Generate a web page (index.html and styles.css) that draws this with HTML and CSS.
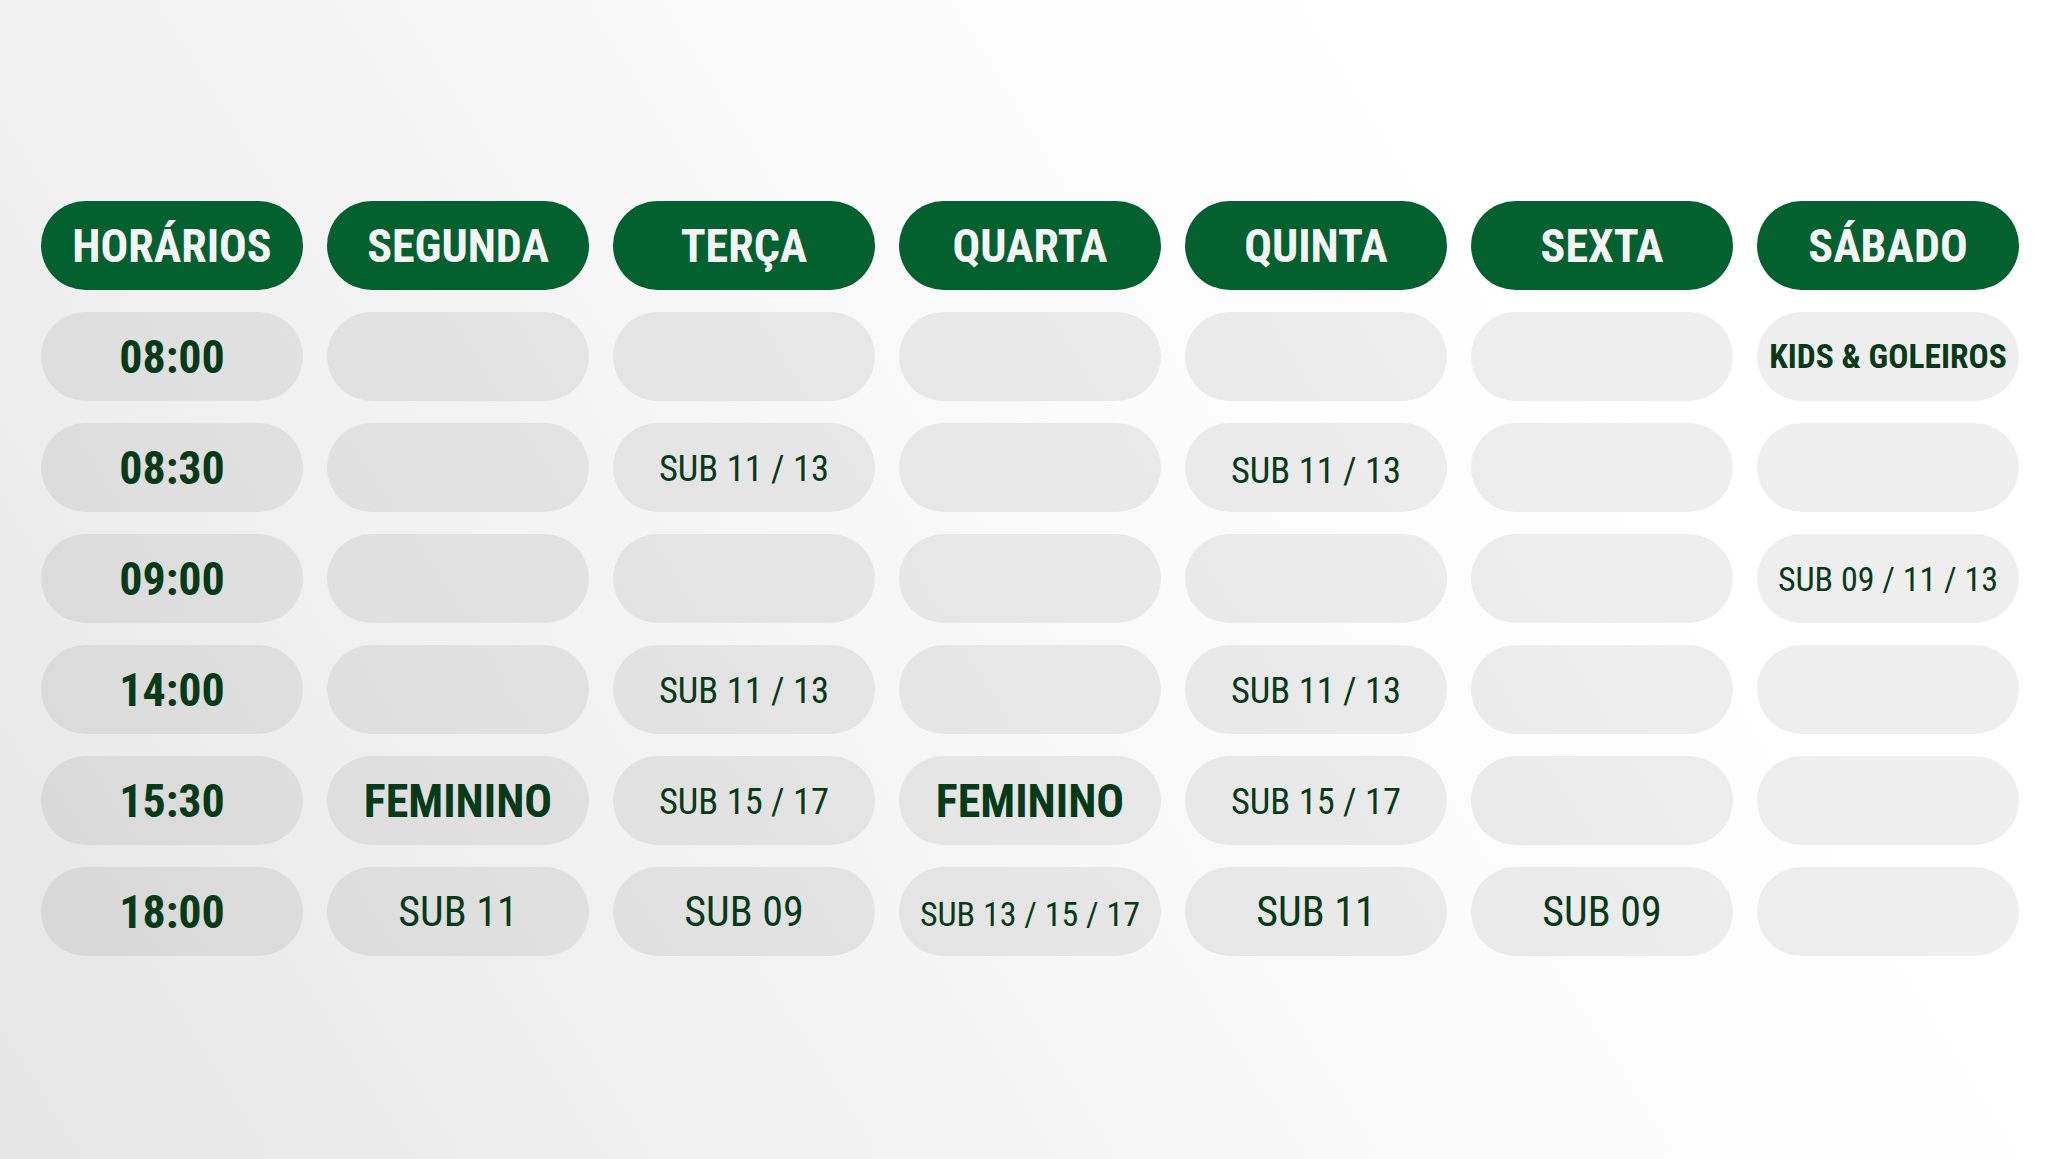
FILE: index.html
```html
<!DOCTYPE html>
<html lang="pt-BR">
<head>
<meta charset="utf-8">
<title>Horários</title>
<link rel="stylesheet" href="styles.css">
</head>
<body>
<main class="page">
  <div class="schedule">
    <div class="pill head"><span class="t">HORÁRIOS</span></div>
    <div class="pill head"><span class="t">SEGUNDA</span></div>
    <div class="pill head"><span class="t">TERÇA</span></div>
    <div class="pill head"><span class="t">QUARTA</span></div>
    <div class="pill head"><span class="t">QUINTA</span></div>
    <div class="pill head"><span class="t">SEXTA</span></div>
    <div class="pill head"><span class="t">SÁBADO</span></div>

    <div class="pill time"><span class="t">08:00</span></div>
    <div class="pill"></div>
    <div class="pill"></div>
    <div class="pill"></div>
    <div class="pill"></div>
    <div class="pill"></div>
    <div class="pill"><span class="t kids">KIDS &amp; GOLEIROS</span></div>

    <div class="pill time"><span class="t">08:30</span></div>
    <div class="pill"></div>
    <div class="pill"><span class="t sub">SUB 11 / 13</span></div>
    <div class="pill"></div>
    <div class="pill"><span class="t sub low">SUB 11 / 13</span></div>
    <div class="pill"></div>
    <div class="pill"></div>

    <div class="pill time"><span class="t">09:00</span></div>
    <div class="pill"></div>
    <div class="pill"></div>
    <div class="pill"></div>
    <div class="pill"></div>
    <div class="pill"></div>
    <div class="pill"><span class="t sub3">SUB 09 / 11 / 13</span></div>

    <div class="pill time"><span class="t">14:00</span></div>
    <div class="pill"></div>
    <div class="pill"><span class="t sub">SUB 11 / 13</span></div>
    <div class="pill"></div>
    <div class="pill"><span class="t sub">SUB 11 / 13</span></div>
    <div class="pill"></div>
    <div class="pill"></div>

    <div class="pill time"><span class="t">15:30</span></div>
    <div class="pill"><span class="t fem">FEMININO</span></div>
    <div class="pill"><span class="t sub">SUB 15 / 17</span></div>
    <div class="pill"><span class="t fem">FEMININO</span></div>
    <div class="pill"><span class="t sub">SUB 15 / 17</span></div>
    <div class="pill"></div>
    <div class="pill"></div>

    <div class="pill time"><span class="t">18:00</span></div>
    <div class="pill"><span class="t big">SUB 11</span></div>
    <div class="pill"><span class="t big">SUB 09</span></div>
    <div class="pill"><span class="t sub3 low2">SUB 13 / 15 / 17</span></div>
    <div class="pill"><span class="t big">SUB 11</span></div>
    <div class="pill"><span class="t big">SUB 09</span></div>
    <div class="pill"></div>
  </div>
</main>
</body>
</html>
```

FILE: styles.css
```css
html, body {
  margin: 0;
  padding: 0;
}

body {
  width: 2060px;
  height: 1159px;
  overflow: hidden;
  background: linear-gradient(58deg, #e5e5e5 0%, #f0f0f0 25%, #f7f7f7 45%, #fdfdfd 66%, #ffffff 76%);
  font-family: "Roboto Condensed", Roboto, "Liberation Sans", sans-serif;
  font-stretch: 75%;
}

.page {
  padding-top: 201px;
  display: flex;
  justify-content: center;
}

.schedule {
  display: grid;
  grid-template-columns: repeat(7, 262px);
  grid-auto-rows: 89px;
  column-gap: 24px;
  row-gap: 22px;
}

.pill {
  border-radius: 45px;
  background: rgba(0, 0, 0, 0.065);
  display: flex;
  align-items: center;
  justify-content: center;
  color: #073a18;
}

.t {
  display: inline-block;
  white-space: nowrap;
  line-height: 1;
}

.head {
  background: #02612f;
  color: #f4f4f4;
  font-weight: 700;
  font-size: 46px;
}

.time .t {
  font-weight: 700;
  font-size: 46px;
}

.fem {
  font-weight: 700;
  font-size: 46px;
}

.kids {
  font-weight: 700;
  font-size: 33.5px;
}

.sub {
  font-size: 36.5px;
  padding-top: 3px;
}

.sub.low {
  padding-top: 8px;
}

.sub3 {
  font-size: 34px;
}

.sub3.low2 {
  padding-top: 5px;
}

.big {
  font-size: 42px;
  font-weight: 400;
}
```
